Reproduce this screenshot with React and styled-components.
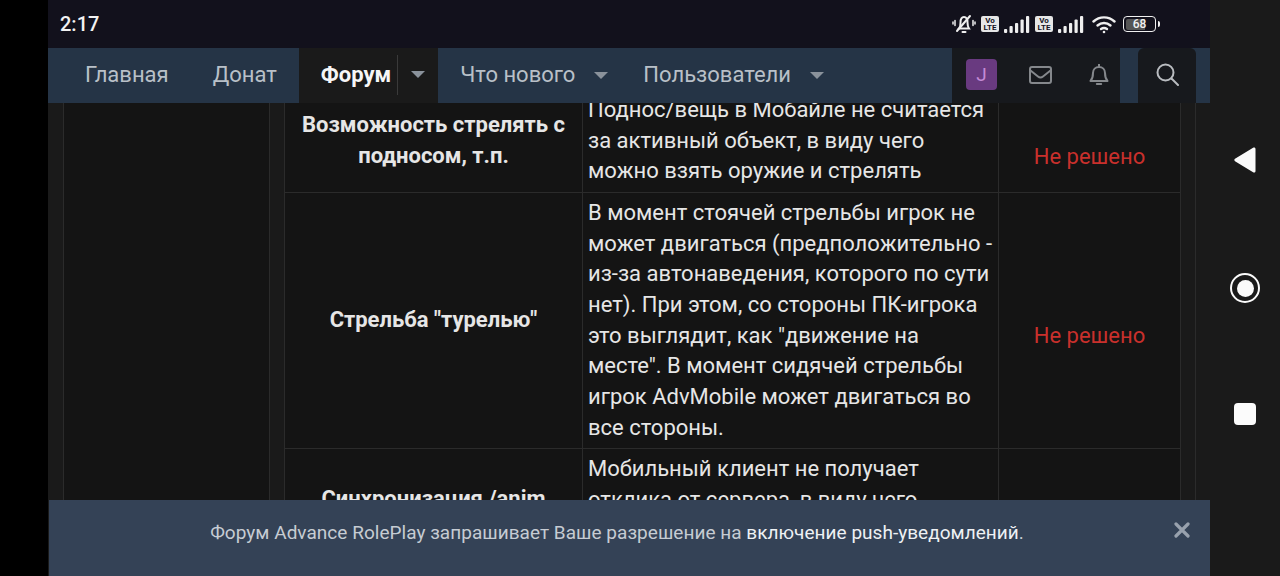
import styled, { createGlobalStyle } from 'styled-components'

const GlobalStyle = createGlobalStyle`
  html, body {
    margin: 0;
    height: 100%;
    background: #000;
    font-family: Roboto, "Liberation Sans", sans-serif;
    overflow: hidden;
  }
  #root { height: 100%; }
`

const Device = styled.div`
  width: 1280px;
  height: 576px;
  display: flex;
  background: #000;
`

const Screen = styled.div`
  position: relative;
  width: 1162px;
  margin-left: 48px;
  height: 100%;
  display: flex;
  flex-direction: column;
  overflow: hidden;
  background: #1a1a1a;
`

const SoftKeys = styled.div`
  flex: 1;
  background: #1a1a1a;
  display: flex;
  flex-direction: column;
  align-items: center;
  padding: 147px 0 0 0;
  box-sizing: border-box;
  gap: 100px;
`

const KeyHome = styled.div`
  width: 30px;
  height: 30px;
  box-sizing: border-box;
  border: 2.5px solid #fbfbfb;
  border-radius: 50%;
  display: flex;
  align-items: center;
  justify-content: center;
  &::after {
    content: '';
    width: 17px;
    height: 17px;
    border-radius: 50%;
    background: #fbfbfb;
  }
`

const KeyRecent = styled.div`
  width: 22px;
  height: 22px;
  border-radius: 4px;
  background: #fbfbfb;
`

const StatusBar = styled.div`
  height: 48px;
  flex: none;
  background: #12111c;
  display: flex;
  align-items: center;
  padding: 0 54px 0 12px;
  color: #f2f2f2;
`

const Clock = styled.div`
  font-size: 20px;
  font-weight: 500;
  margin-right: auto;
`

const StatusIcons = styled.div`
  display: flex;
  align-items: center;
`

const VoLte = styled.div`
  width: 18px;
  height: 16px;
  border-radius: 2px;
  background: #e6e6e6;
  color: #12111c;
  font-size: 8px;
  font-weight: 700;
  line-height: 7.5px;
  text-align: center;
  padding-top: 0.5px;
  box-sizing: border-box;
  margin: 0 5px;
`

const Battery = styled.div`
  width: 33px;
  height: 16px;
  margin-left: 7px;
  box-sizing: border-box;
  border: 1.5px solid #f0f0f0;
  border-radius: 4px;
  padding: 1.5px;
  display: flex;
  position: relative;
  &::after {
    content: '';
    position: absolute;
    right: -5px;
    top: 3.5px;
    width: 2px;
    height: 6px;
    border-radius: 0 2px 2px 0;
    background: #f0f0f0;
  }
`

const BatteryFill = styled.div`
  flex: 1;
  border-radius: 2px;
  background: linear-gradient(90deg, #555 68%, transparent 68%);
  color: #f2f2f2;
  font-size: 12px;
  font-weight: 500;
  line-height: 10px;
  text-align: center;
`

const Nav = styled.nav`
  height: 55px;
  flex: none;
  background: #253446;
  display: flex;
  align-items: stretch;
  padding-left: 15px;
  padding-right: 14px;
  position: relative;
  z-index: 2;
`

const NavLink = styled.div`
  display: flex;
  align-items: center;
  padding: 0 ${p => (p.$caret ? '0' : '22px')} 2px 22px;
  font-size: 22px;
  color: #b9c0c8;
  white-space: nowrap;
`

const ActiveTab = styled.div`
  display: flex;
  align-items: center;
  padding: 0 0 2px 22px;
  background: #1a1a1a;
  color: #f6f6f6;
  font-size: 22px;
  font-weight: 700;
`

const TabDivider = styled.div`
  width: 1px;
  height: 40px;
  background: #3a3a3a;
  margin-left: 6px;
`

const CaretBox = styled.div`
  width: ${p => p.$width}px;
  box-sizing: border-box;
  padding-left: ${p => p.$shift || 0}px;
  display: flex;
  align-items: center;
  justify-content: center;
  &::after {
    content: '';
    border-left: 7.5px solid transparent;
    border-right: 7.5px solid transparent;
    border-top: 7px solid #8a929b;
  }
`

const UserBlock = styled.div`
  margin-left: auto;
  width: 168px;
  background: #17191d;
  display: flex;
  align-items: center;
  padding-bottom: 2px;
  box-sizing: border-box;
`

const Avatar = styled.div`
  width: 31px;
  height: 31px;
  margin-left: 14px;
  border-radius: 4px;
  background: #693a80;
  color: #c48ad6;
  font-size: 19px;
  display: flex;
  align-items: center;
  justify-content: center;
`

const NavIcon = styled.div`
  margin-left: ${p => p.$left}px;
  display: flex;
  color: #85888c;
`

const SearchBlock = styled.div`
  width: 58px;
  margin-left: 18px;
  padding-bottom: 2px;
  box-sizing: border-box;
  background: #17191d;
  border-radius: 6px 6px 0 0;
  display: flex;
  align-items: center;
  justify-content: center;
  color: #b9bcc0;
`

const Viewport = styled.div`
  flex: 1;
  display: flex;
  min-height: 0;
  padding-left: 15px;
  overflow: hidden;
`

const Sidebar = styled.div`
  width: 205px;
  flex: none;
  background: #141414;
  border-left: 1px solid #2b2b2b;
  border-right: 1px solid #2b2b2b;
`

const Main = styled.div`
  width: 926px;
  flex: none;
  box-sizing: border-box;
  padding: 0 15px 0 14px;
  border-right: 1px solid #2b2b2b;
`

const Table = styled.table`
  width: 896px;
  margin-top: -14px;
  border-collapse: collapse;
  table-layout: fixed;
  background: #141414;
  font-size: 22px;
  line-height: 30.65px;
  color: #e6e6e6;
`

const Cell = styled.td`
  border: 1px solid #2b2b2b;
  padding: 5px;
  vertical-align: ${p => p.$align || 'middle'};
`

const NameCell = styled(Cell)`
  font-weight: 700;
  text-align: center;
`

const StateCell = styled(Cell)`
  padding-top: 37px;
  text-align: center;
  color: #c9302c;
`

const Notice = styled.div`
  position: absolute;
  left: 1px;
  right: 0;
  bottom: 0;
  height: 76px;
  background: #344256;
  color: #c6ccd3;
  font-size: 19px;
  letter-spacing: 0.03px;
  box-sizing: border-box;
  padding: 20px 25px 0 0;
  text-align: center;
  z-index: 3;
  line-height: 26px;
`

const NoticeLink = styled.span`
  color: #eef1f4;
`

const CloseBtn = styled.div`
  position: absolute;
  right: 20px;
  top: 22px;
  display: flex;
  color: #98a1ad;
`

function Signal() {
  return (
    <svg width="26" height="17" viewBox="0 0 26 17" fill="#efefef">
      <rect x="0" y="13" width="3.2" height="4" rx="1" />
      <rect x="5.5" y="10" width="3.2" height="7" rx="1" />
      <rect x="11" y="7" width="3.2" height="10" rx="1" />
      <rect x="16.5" y="3.5" width="3.2" height="13.5" rx="1" />
      <rect x="22" y="0" width="3.2" height="17" rx="1" />
    </svg>
  )
}

function MutedBell() {
  return (
    <svg width="24" height="20" viewBox="0 0 24 20" fill="none" stroke="#efefef" strokeWidth="2" strokeLinecap="round">
      <path d="M7 14.500c1.500-1.500 1.500-3 1.500-6C8.500 5 10 3 12 3s3.500 2 3.500 5.500c0 3 .5 4.500 1.500 6z" />
      <path d="M10.500 18h3" />
      <path d="M5 17L18 2" />
      <path d="M3 6.500v5M1 8v2M21 6.500v5M23 8v2" strokeWidth="1.500" />
    </svg>
  )
}

function Wifi() {
  return (
    <svg width="24" height="19" viewBox="0 0 24 19" fill="none" stroke="#efefef" strokeWidth="2.400" strokeLinecap="round" style={{ marginLeft: 8 }}>
      <path d="M1.500 6.500c6-5.500 15-5.500 21 0" />
      <path d="M5.500 10.500c3.800-3.300 9.200-3.300 13 0" />
      <path d="M9 14c1.800-1.300 4.200-1.300 6 0" />
      <circle cx="12" cy="17" r="1.300" fill="#efefef" stroke="none" />
    </svg>
  )
}

function MailIcon() {
  return (
    <svg width="23" height="18" viewBox="0 0 23 18" fill="none" stroke="currentColor" strokeWidth="2">
      <rect x="1" y="1" width="21" height="16" rx="2" />
      <path d="M1.500 4.500l7.500 6c1.500 1.200 3.500 1.200 5 0l7.500-6" />
    </svg>
  )
}

function BellIcon() {
  return (
    <svg width="20" height="23" viewBox="0 0 20 23" fill="none" stroke="currentColor" strokeWidth="2" strokeLinejoin="round">
      <path d="M1.500 18c1.800-2 2.500-3.500 2.500-8 0-3.500 2.500-6 6-6s6 2.500 6 6c0 4.500.7 6 2.500 8z" />
      <path d="M10 1v3" />
      <path d="M7.800 21h4.400" strokeLinecap="round" />
    </svg>
  )
}

function SearchIcon() {
  return (
    <svg width="23" height="23" viewBox="0 0 23 23" fill="none" stroke="currentColor" strokeWidth="2" strokeLinecap="round">
      <circle cx="9.500" cy="9.500" r="8" />
      <path d="M15.500 15.500l6.500 6.500" />
    </svg>
  )
}

function BackKey() {
  return (
    <svg width="22" height="26" viewBox="0 0 22 26" fill="#fbfbfb">
      <path d="M20 0.500c1 0 1.500.6 1.500 1.500v22c0 1-.6 1.500-1.500 1.500-.3 0-.6-.1-.9-.3L1 14.200c-.9-.6-.9-1.800 0-2.400L19.100.8c.3-.2.600-.3.900-.3z" />
    </svg>
  )
}

export default function App() {
  return (
    <Device>
      <GlobalStyle />
      <Screen>
        <StatusBar>
          <Clock>2:17</Clock>
          <StatusIcons>
            <MutedBell />
            <VoLte>Vo<br />LTE</VoLte>
            <Signal />
            <VoLte>Vo<br />LTE</VoLte>
            <Signal />
            <Wifi />
            <Battery>
              <BatteryFill>68</BatteryFill>
            </Battery>
          </StatusIcons>
        </StatusBar>
        <Nav>
          <NavLink>Главная</NavLink>
          <NavLink>Донат</NavLink>
          <ActiveTab>
            Форум
            <TabDivider />
            <CaretBox $width={40} />
          </ActiveTab>
          <NavLink $caret>Что нового</NavLink>
          <CaretBox $width={46} $shift={5} />
          <NavLink $caret>Пользователи</NavLink>
          <CaretBox $width={52} />
          <UserBlock>
            <Avatar>J</Avatar>
            <NavIcon $left={32}><MailIcon /></NavIcon>
            <NavIcon $left={37}><BellIcon /></NavIcon>
          </UserBlock>
          <SearchBlock><SearchIcon /></SearchBlock>
        </Nav>
        <Viewport>
          <Sidebar />
          <Main>
            <Table>
              <colgroup>
                <col style={{ width: 298 }} />
                <col style={{ width: 416 }} />
                <col style={{ width: 182 }} />
              </colgroup>
              <tbody>
                <tr>
                  <NameCell>Возможность стрелять с подносом, т.п.</NameCell>
                  <Cell>Поднос/вещь в Мобайле не считается за активный объект, в виду чего можно взять оружие и стрелять</Cell>
                  <StateCell>Не решено</StateCell>
                </tr>
                <tr>
                  <NameCell>Стрельба "турелью"</NameCell>
                  <Cell>В момент стоячей стрельбы игрок не может двигаться (предположительно - из-за автонаведения, которого по сути нет). При этом, со стороны ПК-игрока это выглядит, как "движение на месте". В момент сидячей стрельбы игрок AdvMobile может двигаться во все стороны.</Cell>
                  <StateCell>Не решено</StateCell>
                </tr>
                <tr style={{ height: 102 }}>
                  <NameCell>Синхронизация /anim</NameCell>
                  <Cell $align="top">Мобильный клиент не получает отклика от сервера, в виду чего</Cell>
                  <StateCell />
                </tr>
              </tbody>
            </Table>
          </Main>
        </Viewport>
        <Notice>
          Форум Advance RolePlay запрашивает Ваше разрешение на <NoticeLink>включение push-уведомлений</NoticeLink>.
          <CloseBtn>
            <svg width="16" height="16" viewBox="0 0 16 16" stroke="currentColor" strokeWidth="3.200" strokeLinecap="round">
              <path d="M2 2l12 12M14 2L2 14" />
            </svg>
          </CloseBtn>
        </Notice>
      </Screen>
      <SoftKeys>
        <BackKey />
        <KeyHome />
        <KeyRecent />
      </SoftKeys>
    </Device>
  )
}
